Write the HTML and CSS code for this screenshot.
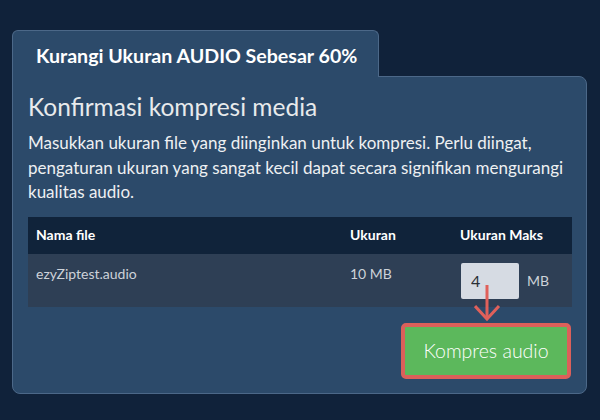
FILE: index.html
```html
<!DOCTYPE html>
<html lang="id">
<head>
<meta charset="utf-8">
<title>Kurangi Ukuran AUDIO</title>
<link rel="stylesheet" href="styles.css">
</head>
<body>
<div class="card">
  <div class="tab">Kurangi Ukuran AUDIO Sebesar 60%</div>
  <div class="panel">
    <h2 class="heading">Konfirmasi kompresi media</h2>
    <p class="desc">Masukkan ukuran file yang diinginkan untuk kompresi. Perlu diingat, pengaturan ukuran yang sangat kecil dapat secara signifikan mengurangi kualitas audio.</p>
    <table class="files">
      <thead>
        <tr><th class="c-name">Nama file</th><th class="c-size">Ukuran</th><th class="c-max">Ukuran Maks</th></tr>
      </thead>
      <tbody>
        <tr>
          <td class="c-name">ezyZiptest.audio</td>
          <td class="c-size">10 MB</td>
          <td class="c-max">
            <div class="max-wrap">
              <input class="max-input" type="text" value="4">
              <span class="unit">MB</span>
              <svg class="arrow" width="30" height="40" viewBox="0 0 30 40" aria-hidden="true">
                <path d="M13 0 V34" stroke="#e0605a" stroke-width="3" fill="none"/>
                <path d="M1 21 L13 34 L25 21" stroke="#e0605a" stroke-width="3" fill="none" stroke-linejoin="miter"/>
              </svg>
            </div>
          </td>
        </tr>
      </tbody>
    </table>
    <div class="actions">
      <button class="btn" type="button">Kompres audio</button>
    </div>
  </div>
</div>
</body>
</html>
```

FILE: styles.css
```css
* { box-sizing: border-box; }
html, body { margin: 0; padding: 0; }
body {
  background: #10223a;
  font-family: Lato, "Open Sans", sans-serif;
  width: 600px;
  height: 420px;
  overflow: hidden;
}
.card {
  width: 575px;
  margin: 30px 0 0 12px;
}
.tab {
  position: relative;
  z-index: 1;
  width: 367px;
  height: 47px;
  margin-bottom: -1px;
  padding: 12px 0 0 23px;
  background: #2c4a6a;
  border: 1px solid #4c6888;
  border-bottom: 0;
  border-radius: 6px 6px 0 0;
  color: #ffffff;
  font-size: 19.6px;
  font-weight: 700;
  line-height: 26px;
}
.panel {
  background: #2c4a6a;
  border: 1px solid #4c6888;
  border-radius: 0 8px 8px 8px;
  padding: 14px 15px 14px 15px;
}
.heading {
  margin: 0;
  color: #e8eaec;
  font-size: 24.5px;
  font-weight: 400;
  line-height: 32px;
}
.desc {
  margin: 8px 0 0 0;
  color: #eef0f2;
  font-size: 17px;
  line-height: 24.5px;
}
.files {
  width: 544px;
  margin-top: 12px;
  border-collapse: collapse;
  table-layout: fixed;
}
.files th {
  background: #10233a;
  color: #ffffff;
  font-size: 14px;
  font-weight: 700;
  text-align: left;
  height: 37px;
  padding: 0 8px;
  line-height: 18px;
}
.files td {
  background: #2e3f55;
  color: #cdd2d9;
  font-size: 14px;
  text-align: left;
  vertical-align: top;
  height: 53px;
  padding: 11px 8px 0 8px;
  line-height: 18px;
}
.c-name { width: 314px; }
.c-size { width: 110px; }
.c-max { width: 120px; }
.files td.c-max { padding: 9px 8px 0 9px; }
.max-wrap {
  position: relative;
  display: flex;
  align-items: center;
  gap: 8px;
}
.max-input {
  width: 58px;
  height: 36px;
  border: 0;
  border-radius: 2px;
  background: #d6dbe3;
  color: #2a2f36;
  font-family: Lato, "Open Sans", sans-serif;
  font-size: 16px;
  padding: 0 0 0 10px;
  outline: none;
}
.unit {
  color: #cdd2d9;
  font-size: 14px;
}
.arrow {
  position: absolute;
  left: 13px;
  top: 22px;
  z-index: 2;
}
.actions {
  display: flex;
  justify-content: flex-end;
  margin-top: 16px;
}
.btn {
  width: 170px;
  height: 56px;
  background: #5cb85c;
  border: 4px solid #dc605a;
  border-radius: 5px;
  color: #ffffff;
  font-family: Lato, "Open Sans", sans-serif;
  font-size: 19.5px;
  font-weight: 300;
  padding: 0;
  cursor: pointer;
}
```
